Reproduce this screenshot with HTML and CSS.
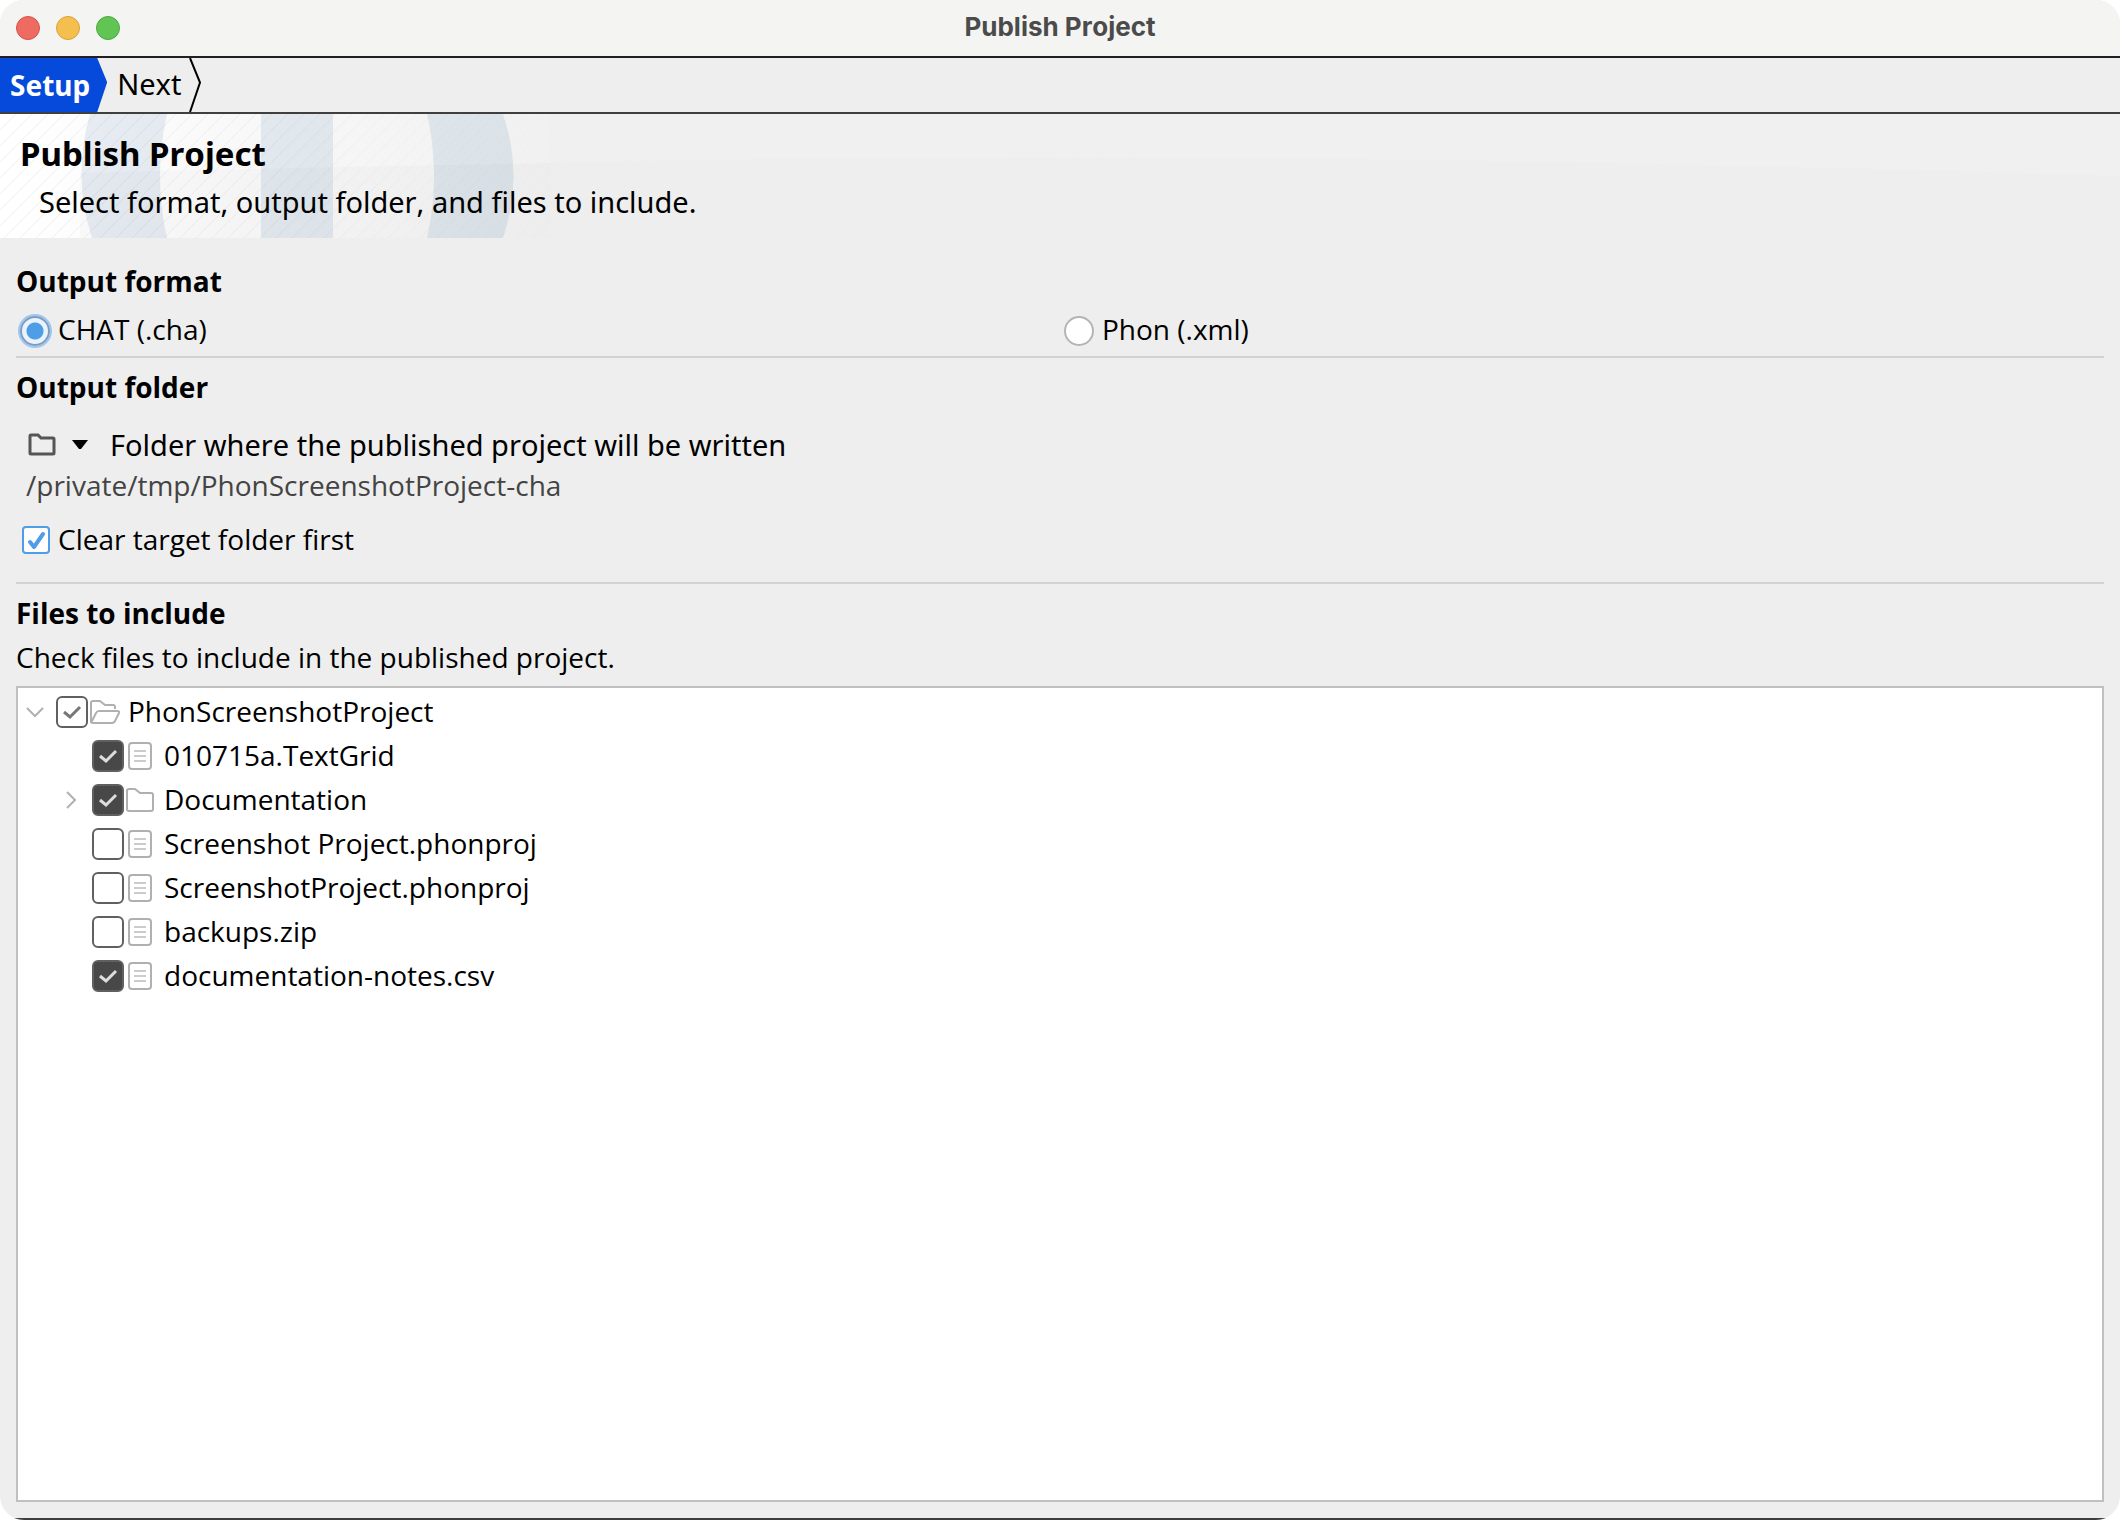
FILE: index.html
```html
<!DOCTYPE html>
<html lang="en">
<head>
    <meta charset="UTF-8">
    <meta name="viewport" content="width=device-width, initial-scale=1.0">
    <title>Publish Project</title>
    <link rel="stylesheet" href="styles.css">
</head>
<body>

<div class="window">
    <div class="titlebar">
        <div class="lights">
            <button class="light close" aria-label="Close"></button>
            <button class="light minimize" aria-label="Minimize"></button>
            <button class="light zoom" aria-label="Zoom"></button>
        </div>
        <div class="window-title">Publish Project</div>
    </div>

    <nav class="steps">
        <button class="step active">Setup</button>
        <button class="step">Next</button>
        <svg class="step-end" width="14" height="54" viewBox="0 0 14 54" fill="none" stroke="#000" stroke-width="2">
            <path d="M1 0 L11 24.500 L1 54"/>
        </svg>
    </nav>

    <header class="banner">
        <svg class="banner-art" width="2120" height="124" viewBox="0 0 2120 124">
            <defs>
                <linearGradient id="fade" x1="0" x2="1" y1="0" y2="0">
                    <stop offset="0" stop-color="#fff"/>
                    <stop offset="0.600" stop-color="#f6f6f6"/>
                    <stop offset="1" stop-color="#f1f1f1"/>
                </linearGradient>
                <linearGradient id="letters" gradientUnits="userSpaceOnUse" x1="80" x2="514" y1="0" y2="0">
                    <stop offset="0" stop-color="#e6ecf1"/>
                    <stop offset="1" stop-color="#dce3e8"/>
                </linearGradient>
                <pattern id="stripes" width="16" height="16" patternUnits="userSpaceOnUse">
                    <path d="M-2 18 L18 -2" stroke="#000" stroke-opacity="0.060" stroke-width="1"/>
                </pattern>
                <linearGradient id="stripeFade" x1="0" x2="1" y1="0" y2="0">
                    <stop offset="0" stop-color="#fff"/>
                    <stop offset="1" stop-color="#000"/>
                </linearGradient>
                <mask id="stripeMask">
                    <rect width="700" height="124" fill="url(#stripeFade)"/>
                </mask>
            </defs>
            <path d="M550 0 H2120 V62 Q1200 33 550 49 Z" fill="#f0f0f0"/>
            <rect width="550" height="124" fill="url(#fade)"/>
            <g fill="url(#letters)">
                <path d="M90 0 H167 Q153 62 167 124 H92 Q72 62 90 0 Z"/>
                <rect x="261" width="72" height="124"/>
                <path d="M427 0 H503 Q524 62 503 124 H427 Q441 62 427 0 Z"/>
            </g>
            <path d="M80 59 Q275 54 550 49 V124 H80 Z" fill="#456" fill-opacity="0.025"/>
            <rect width="700" height="124" fill="url(#stripes)" mask="url(#stripeMask)"/>
        </svg>
        <h1>Publish Project</h1>
        <p>Select format, output folder, and files to include.</p>
    </header>

    <main class="content">
        <section class="output-format">
            <h2>Output format</h2>
            <div class="formats">
                <label class="option"><input type="radio" name="format" checked> CHAT (.cha)</label>
                <label class="option"><input type="radio" name="format"> Phon (.xml)</label>
            </div>
        </section>

        <section class="output-folder">
            <h2>Output folder</h2>
            <button class="folder-button">
                <svg width="28" height="24" viewBox="0 0 28 24" fill="none" stroke="#555" stroke-width="3">
                    <path d="M2 20 V3 Q2 2 3 2 H10 L13 5 H25 Q26 5 26 6 V20 Q26 21 25 21 H3 Q2 21 2 20 Z"/>
                </svg>
                <svg width="16" height="10" viewBox="0 0 16 10"><path d="M0 0 H16 L9 9 H7 Z"/></svg>
                <span>Folder where the published project will be written</span>
            </button>
            <div class="path">/private/tmp/PhonScreenshotProject-cha</div>
            <label class="option clear"><input type="checkbox" checked> Clear target folder first</label>
        </section>

        <section class="files">
            <h2>Files to include</h2>
            <p>Check files to include in the published project.</p>
            <ul class="tree" id="tree"></ul>
        </section>
    </main>
</div>

<script>
    const files = [
        { name: 'PhonScreenshotProject', type: 'open', level: 0, state: 'partial' },
        { name: '010715a.TextGrid', type: 'file', level: 1, state: 'checked' },
        { name: 'Documentation', type: 'folder', level: 1, state: 'checked' },
        { name: 'Screenshot Project.phonproj', type: 'file', level: 1, state: '' },
        { name: 'ScreenshotProject.phonproj', type: 'file', level: 1, state: '' },
        { name: 'backups.zip', type: 'file', level: 1, state: '' },
        { name: 'documentation-notes.csv', type: 'file', level: 1, state: 'checked' }
    ];

    const icons = {
        open: '<path d="M3 27 V7 Q3 5 5 5 H12 L17 9 H25 Q27 9 27 11 V13 M3 27 L8 17 Q9 15 11 15 H29 Q32 15 31 17 L27 25 Q26 27 24 27 H5 Q3 27 3 25"/>',
        folder: '<path d="M3 25 V7 Q3 5 5 5 H11 L16 9 H27 Q29 9 29 11 V25 Q29 27 27 27 H5 Q3 27 3 25 Z"/>',
        file: '<rect x="5" y="3" width="22" height="26" rx="3"/><path d="M10 11 H22 M10 16 H22 M10 21 H22" stroke="#ccc"/>'
    };

    const arrows = {
        open: '<path d="M1 5 L9 13 L17 5"/>',
        folder: '<path d="M5 1 L13 9 L5 17"/>'
    };

    function arrow(type) {
        if (!arrows[type]) {
            return '<span class="arrow"></span>';
        }
        return `<button class="arrow" aria-label="Expand or collapse">
            <svg width="18" height="18" viewBox="0 0 18 18" fill="none" stroke="#b0b0b0" stroke-width="2">${arrows[type]}</svg>
        </button>`;
    }

    files.forEach(file => {
        const li = document.createElement('li');
        li.className = file.level ? 'row child' : 'row';
        li.innerHTML = `
            ${arrow(file.type)}
            <label>
                <input type="checkbox" class="${file.state}" ${file.state ? 'checked' : ''}>
                <svg width="32" height="32" viewBox="0 0 32 32" fill="none" stroke="#b0b0b0" stroke-width="2">${icons[file.type]}</svg>
                <span>${file.name}</span>
            </label>
        `;
        document.getElementById('tree').appendChild(li);
    });
</script>

</body>
</html>
```
FILE: styles.css
```css
* {
    box-sizing: border-box;
}

body {
    margin: 0;
    background: #fff;
    color: #000;
    font-family: "Open Sans", "Noto Sans", sans-serif;
    font-size: 28px;
    font-kerning: none;
    line-height: 38px;
}

h1, h2, p, ul {
    margin: 0;
    padding: 0;
}

h2 {
    font-size: 28px;
    line-height: 38px;
}

button {
    margin: 0;
    padding: 0;
    border: none;
    background: none;
    color: inherit;
    font: inherit;
    font-kerning: none;
}

.window {
    display: flex;
    flex-direction: column;
    min-height: 100vh;
    background: #eee;
    border-radius: 24px;
    overflow: hidden;
}

.window::after {
    content: "";
    height: 2px;
    background: #3f3f3f;
}

.titlebar {
    display: grid;
    grid-template-columns: 1fr auto 1fr;
    align-items: center;
    height: 58px;
    padding: 0 16px;
    background: #f4f4f2;
    border-bottom: 2px solid #231f20;
}

.lights {
    display: flex;
    gap: 16px;
}

.light {
    width: 24px;
    height: 24px;
    border: 1px solid;
    border-radius: 50%;
}

.close {
    background: #ed6b60;
    border-color: #d35449;
}

.minimize {
    background: #f5bf4f;
    border-color: #d9a13c;
}

.zoom {
    background: #61c554;
    border-color: #50a73f;
}

.window-title {
    padding-bottom: 2px;
    color: #4b4b4b;
    font-family: Inter, sans-serif;
    font-size: 26px;
    font-weight: bold;
}

.steps {
    display: flex;
    height: 56px;
    border-bottom: 2px solid #3f3f3f;
    font-family: "Noto Sans", sans-serif;
}

.step {
    padding: 0 8px 2px 10px;
    font-size: 29px;
}

.step.active {
    padding: 0 17px 0 10px;
    background: #064adb;
    color: #fff;
    font-size: 28px;
    font-weight: bold;
    clip-path: polygon(0 0, calc(100% - 10px) 0, 100% 45%, calc(100% - 10px) 100%, 0 100%);
}

.banner {
    position: relative;
    height: 124px;
    padding: 18px 20px 0;
    overflow: hidden;
    font-family: "Noto Sans", sans-serif;
}

.banner-art {
    position: absolute;
    top: 0;
    left: 0;
}

.banner h1,
.banner p {
    position: relative;
}

.banner h1 {
    font-size: 33px;
    line-height: 44px;
}

.banner p {
    padding: 7px 0 0 19px;
    font-size: 29px;
}

.content {
    display: flex;
    flex: 1;
    flex-direction: column;
    padding: 24px 16px 16px;
}

.output-format,
.output-folder {
    border-bottom: 2px solid #d2d2d2;
}

.output-format {
    padding-bottom: 8px;
}

.formats {
    display: grid;
    grid-template-columns: 1fr 1fr;
    padding-top: 10px;
}

.option {
    display: flex;
    align-items: center;
    gap: 8px;
    padding-left: 4px;
}

input {
    flex: none;
    margin: 0;
    appearance: none;
    background: #fff center no-repeat;
}

.option input {
    width: 30px;
    height: 30px;
    margin-top: 4px;
    border: 2px solid #b4b4b4;
    border-radius: 50%;
}

.option input[type="radio"]:checked {
    border-color: #7a9dc3;
    background: radial-gradient(circle, #4e9de7 8px, #eaf2fb 9px);
    box-shadow: 0 0 0 2px #9ec6ee;
}

.output-folder {
    padding: 10px 0 24px;
}

.folder-button {
    display: flex;
    align-items: center;
    gap: 16px;
    margin-top: 20px;
    padding-left: 12px;
    font-family: "Noto Sans", sans-serif;
    font-size: 29px;
    line-height: 38px;
}

.folder-button span {
    padding-left: 6px;
}

.path {
    margin-top: 2px;
    padding-left: 10px;
    color: #444;
}

.clear {
    margin-top: 16px;
    padding-left: 6px;
}

.option.clear input {
    width: 28px;
    height: 28px;
    margin-top: 2px;
    border-radius: 4px;
}

.option.clear input:checked {
    border-color: #4e9de7;
    background-image: url("data:image/svg+xml,%3Csvg xmlns='http://www.w3.org/2000/svg' width='24' height='24' fill='none' stroke='%234e9de7' stroke-width='4' stroke-linecap='round' stroke-linejoin='round'%3E%3Cpath d='M6 14 L10 19 L19 6'/%3E%3C/svg%3E");
}

.files {
    display: flex;
    flex: 1;
    flex-direction: column;
    padding-top: 10px;
}

.files p {
    margin-top: 6px;
}

.tree {
    flex: 1;
    margin-top: 10px;
    padding: 2px 0;
    background: #fff;
    border: 2px solid #c0c0c0;
    list-style: none;
}

.row {
    display: flex;
    align-items: center;
    height: 44px;
    padding-left: 8px;
}

.row.child {
    padding-left: 44px;
}

.arrow {
    display: flex;
    flex: none;
    width: 30px;
}

.row label {
    display: flex;
    align-items: center;
}

.row label span {
    padding: 0 0 2px 8px;
}

.row input {
    width: 32px;
    height: 32px;
    border: 2px solid #606060;
    border-radius: 6px;
}

.row input.checked:checked {
    background-color: #484848;
    background-image: url("data:image/svg+xml,%3Csvg xmlns='http://www.w3.org/2000/svg' width='28' height='28' fill='none' stroke='%23ddd' stroke-width='3'%3E%3Cpath d='M6 14 L12 19 L22 9'/%3E%3C/svg%3E");
}

.row input.partial:checked {
    background-image: url("data:image/svg+xml,%3Csvg xmlns='http://www.w3.org/2000/svg' width='28' height='28' fill='none' stroke='%23777' stroke-width='3'%3E%3Cpath d='M6 14 L12 19 L22 9'/%3E%3C/svg%3E");
}
```
